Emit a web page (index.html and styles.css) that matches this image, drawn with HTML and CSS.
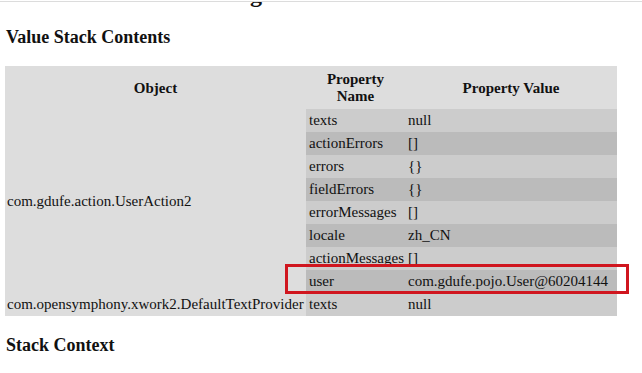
FILE: index.html
```html
<!DOCTYPE html>
<html lang="en">
<head>
    <meta charset="UTF-8">
    <meta name="viewport" content="width=device-width, initial-scale=1.0">
    <title>Struts ValueStack Debug</title>
    <link rel="stylesheet" href="styles.css">
</head>
<body>
    <div class="page">
        <h2 class="title">Struts ValueStack Debug</h2>

        <h3>Value Stack Contents</h3>
        <div class="stack">
            <table class="values">
                <colgroup>
                    <col class="col-object">
                    <col class="col-name">
                    <col class="col-value">
                </colgroup>
                <tr>
                    <th>Object</th>
                    <th>Property Name</th>
                    <th>Property Value</th>
                </tr>
                <tr class="odd">
                    <td class="object" rowspan="8">com.gdufe.action.UserAction2</td>
                    <td>texts</td>
                    <td>null</td>
                </tr>
                <tr class="even">
                    <td>actionErrors</td>
                    <td>[]</td>
                </tr>
                <tr class="odd">
                    <td>errors</td>
                    <td>{}</td>
                </tr>
                <tr class="even">
                    <td>fieldErrors</td>
                    <td>{}</td>
                </tr>
                <tr class="odd">
                    <td>errorMessages</td>
                    <td>[]</td>
                </tr>
                <tr class="even">
                    <td>locale</td>
                    <td>zh_CN</td>
                </tr>
                <tr class="odd">
                    <td>actionMessages</td>
                    <td>[]</td>
                </tr>
                <tr class="even">
                    <td>user</td>
                    <td>com.gdufe.pojo.User@60204144</td>
                </tr>
                <tr class="odd">
                    <td class="object">com.opensymphony.xwork2.DefaultTextProvider</td>
                    <td>texts</td>
                    <td>null</td>
                </tr>
            </table>
            <!-- highlight around the user row -->
            <div class="mark"></div>
        </div>

        <h3>Stack Context</h3>
    </div>
</body>
</html>
```

FILE: styles.css
```css
body {
    margin: 0;
    background-color: white;
    color: #111;
    font-family: "Liberation Serif", "Times New Roman", serif;
}
.page {
    margin-top: 1px;
    border-top: 1px solid #dcdcdc;
    padding: 0 5px;
    overflow: hidden;
}
/* page is scrolled, only the tail of the title shows */
.title {
    font-size: 24px;
    margin: -21px 0 19px 1px;
}
h3 {
    font-size: 18px;
    margin: 0 0 18px 1px;
}
.stack {
    position: relative;
    width: 612px;
    margin-bottom: 19px;
}
.values {
    width: 612px;
    table-layout: fixed;
    border-collapse: collapse;
    background-color: #dddddd;
    font-size: 15px;
}
.col-object {
    width: 301px;
}
.col-name {
    width: 99px;
}
.col-value {
    width: 212px;
}
.values th {
    font-weight: bold;
    line-height: 17px;
    padding: 5px 3px 4px;
    text-align: center;
}
.values td {
    line-height: 17px;
    padding: 3px 2px 3px 3px;
    white-space: nowrap;
    text-align: left;
}
.values .odd td {
    background-color: #cccccc;
}
.values .even td {
    background-color: #bbbbbb;
}
.values td.object {
    background-color: #dddddd;
    padding-left: 2px;
}
.mark {
    position: absolute;
    left: 280px;
    top: 198px;
    width: 344px;
    height: 30px;
    box-sizing: border-box;
    border: 3px solid #d0161f;
}
```
